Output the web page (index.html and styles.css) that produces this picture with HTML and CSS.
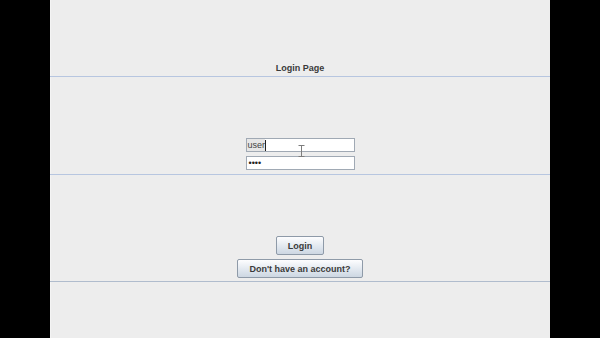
FILE: index.html
```html
<!DOCTYPE html>
<html lang="en">
<head>
  <meta charset="UTF-8" />
  <title>Login Page</title>
  <link rel="stylesheet" href="styles.css">
</head>
<body>
  <div id="frame">
    <div class="row title-row">
      <span class="title">Login Page</span>
    </div>
    <div class="row fields-row">
      <div class="field"><span class="typed">user</span><span class="caret"></span></div>
      <div class="field"><span class="dots">••••</span></div>
    </div>
    <div class="row buttons-row">
      <button class="btn">Login</button>
      <button class="btn">Don't have an account?</button>
    </div>
    <div class="row rest-row"></div>
    <svg class="ibeam" width="7" height="12" viewBox="0 0 7 12">
      <path d="M0.5 0.5h6M0.5 11.5h6M3.5 0.5v11" stroke="#7d7d7d" stroke-width="1" fill="none"/>
    </svg>
  </div>
</body>
</html>
```

FILE: styles.css
```css
html, body { margin: 0; padding: 0; background: #000; }
body { font-family: "Liberation Sans", Arial, sans-serif; }
#frame { position: relative; width: 500px; height: 338px; margin: 0 auto; background: #ededed; display: flex; flex-direction: column; box-shadow: inset 1px 0 0 #f4f4f4; }
.row { display: flex; flex-direction: column; align-items: center; justify-content: flex-end; box-sizing: border-box; }
.title-row { height: 77px; border-bottom: 1px solid #b7c6e0; }
.title { font-weight: bold; font-size: 9px; color: #3a3a3a; padding-bottom: 3px; }
.fields-row { height: 98px; gap: 4px; padding-bottom: 4px; border-bottom: 1px solid #b7c6e0; }
.field { width: 109px; height: 14px; box-sizing: border-box; background: #fff; border: 1px solid #a0a9b4; display: flex; align-items: center; font-size: 9px; color: #444; }
.typed { background: #e6e6e6; padding: 0 0 0 1px; line-height: 12px; }
.caret { width: 1px; height: 11px; background: #222; }
.dots { font-size: 9px; padding-left: 2px; color: #222; }
.buttons-row { height: 107px; gap: 4px; padding-bottom: 3px; border-bottom: 1px solid #b0bccd; }
.btn { height: 19px; padding: 0 11px; font-family: inherit; font-size: 9px; font-weight: bold; color: #3a3a3a; border: 1px solid #8e9aa8; border-radius: 2px; background: linear-gradient(#fdfdfe, #dfe6ee 60%, #cdd7e2); cursor: pointer; }
.rest-row { flex: 1; }
.ibeam { position: absolute; left: 248px; top: 145px; }
```
